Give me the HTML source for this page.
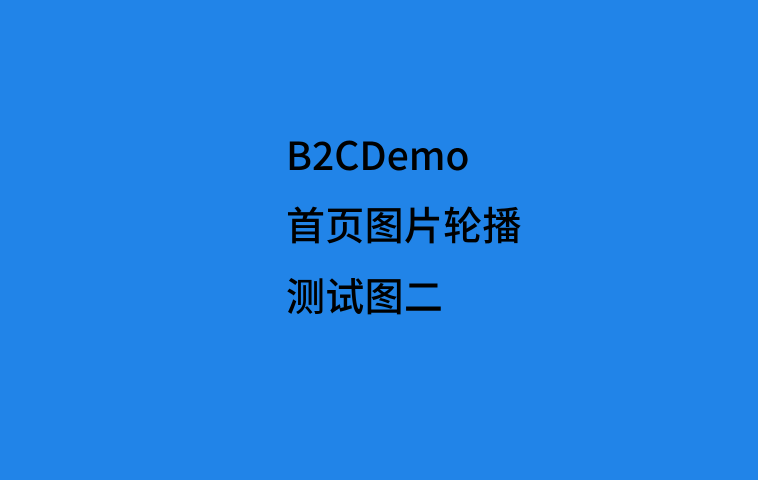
<!DOCTYPE html>
<html><head><meta charset="utf-8"><style>
html,body{margin:0;padding:0;width:758px;height:480px;overflow:hidden;background:#2184e8;}
div{position:absolute;left:286px;font-family:"Noto Sans CJK SC","Liberation Sans",sans-serif;font-size:39px;line-height:39px;font-weight:500;color:#000;white-space:nowrap;}
</style></head><body>
<div style="top:135px">B2CDemo</div>
<div style="top:205px;letter-spacing:0.3px">首页图片轮播</div>
<div style="top:276px;letter-spacing:0.3px">测试图二</div>
</body></html>
